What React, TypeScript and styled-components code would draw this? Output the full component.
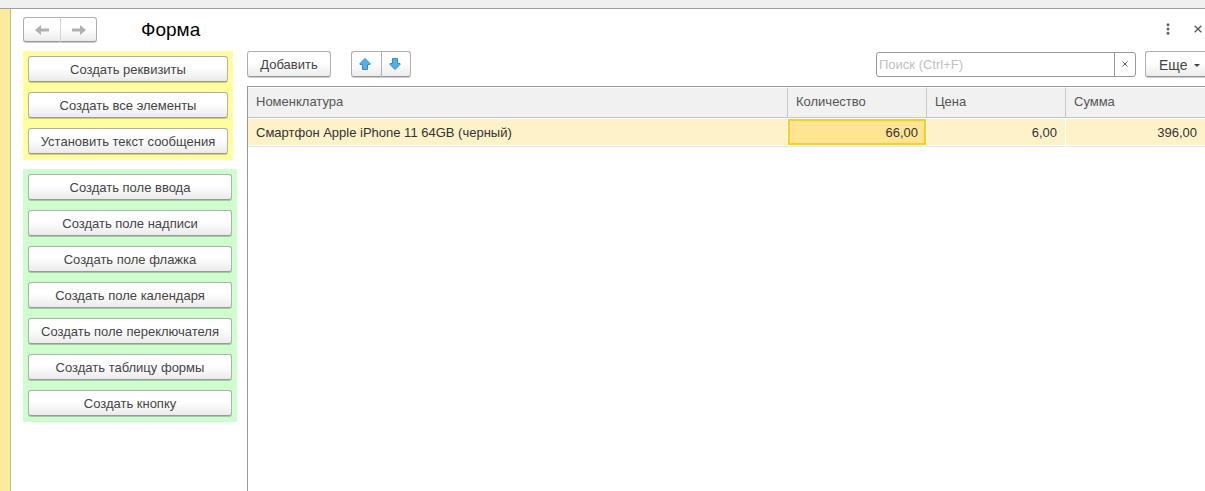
import React from "react";
import styled, { createGlobalStyle, css } from "styled-components";

const GlobalStyle = createGlobalStyle`
  *, *::before, *::after { box-sizing: border-box; }
  body {
    margin: 0;
    background: #fff;
    color: #333;
    font: 13px/16px "Liberation Sans", Arial, sans-serif;
  }
  button, input { font: inherit; color: inherit; }
`;

const Page = styled.div`
  display: flex;
  flex-direction: column;
  min-height: 100vh;
  overflow: hidden;
`;

const TopStrip = styled.div`
  height: 9px;
  background: #f0f0f0;
  border-bottom: 1px solid #a0a0a0;
`;

const Workspace = styled.div`
  flex: 1;
  display: flex;
`;

const SideStrip = styled.div`
  flex: none;
  width: 11px;
  background: #fbeb9e;
  border-right: 1px solid #c9bc7e;
`;

const Form = styled.main`
  flex: 1;
  min-width: 0;
  display: flex;
  flex-direction: column;
  padding: 8px 0 0 12px;
`;

const Header = styled.header`
  display: flex;
  align-items: flex-start;
  height: 26px;
  margin-bottom: 8px;
`;

const Title = styled.h1`
  flex: 1;
  margin: 0 0 0 44px;
  font-size: 19px;
  line-height: 26px;
  font-weight: 400;
  color: #000;
`;

const raised = css`
  height: 26px;
  padding: 0;
  border: 1px solid #b0b0b0;
  border-bottom-color: #999;
  border-radius: 3px;
  background: linear-gradient(#fff 45%, #ebebeb);
  box-shadow: 0 1px rgba(0, 0, 0, 0.2);
  color: #444;
`;

const Button = styled.button`
  ${raised}
  padding-top: 2px;
`;

const ButtonPair = styled.div<{ $divider: string }>`
  display: flex;
  button + button {
    border-left-color: ${(p) => p.$divider};
  }
`;

const PairButton = styled.button<{ $width: number }>`
  ${raised}
  display: flex;
  align-items: center;
  justify-content: center;
  width: ${(p) => p.$width}px;
  &:first-child {
    border-right: 0;
    border-radius: 3px 0 0 3px;
  }
  &:last-child {
    border-radius: 0 3px 3px 0;
  }
`;

const NavPair = styled(ButtonPair)`
  button {
    height: 25px;
    padding-top: 1px;
  }
`;

const MovePair = styled(ButtonPair)`
  button { padding-right: 3px; }
`;

const IconButton = styled.button`
  display: flex;
  align-items: center;
  justify-content: center;
  width: 30px;
  height: 23px;
  padding: 0;
  border: 0;
  background: none;
`;

const CloseButton = styled(IconButton)`
  width: 14px;
  margin-left: 8px;
`;

const Columns = styled.div`
  flex: 1;
  display: flex;
  gap: 10px;
`;

const Sidebar = styled.aside`
  flex: none;
  width: 214px;
  display: flex;
  flex-direction: column;
  align-items: flex-start;
  gap: 9px;
`;

const Group = styled.div<{ $color: string; $width: number }>`
  display: flex;
  flex-direction: column;
  gap: 10px;
  width: ${(p) => p.$width}px;
  padding: 5px 5px 6px;
  background: ${(p) => p.$color};
`;

const Content = styled.section`
  flex: 1;
  min-width: 0;
  display: flex;
  flex-direction: column;
`;

const Toolbar = styled.div`
  display: flex;
  align-items: flex-start;
  height: 27px;
  margin-bottom: 8px;
`;

const AddButton = styled(Button)`
  width: 84px;
  margin-right: 20px;
`;

const Search = styled.div`
  display: flex;
  align-self: flex-end;
  width: 260px;
  height: 25px;
  margin: 0 9px 1px auto;
  border: 1px solid #999;
  border-radius: 3px;
`;

const SearchInput = styled.input`
  flex: 1;
  min-width: 0;
  padding: 1px 2px 0;
  border: 0;
  outline: 0;
  background: none;
  &::placeholder {
    color: #c0c0c8;
    opacity: 1;
  }
`;

const ClearButton = styled.button`
  display: flex;
  align-items: center;
  justify-content: center;
  width: 21px;
  padding: 0 1px 2px 0;
  border: 0;
  border-left: 1px solid #999;
  background: none;
`;

const MoreButton = styled(Button)`
  display: flex;
  align-items: center;
  gap: 6px;
  width: 60px;
  padding-left: 13px;
  border-right: 0;
  border-radius: 3px 0 0 3px;
  font-size: 14px;
`;

const TableArea = styled.div`
  flex: 1;
  border: solid #999;
  border-width: 1px 0 0 1px;
`;

const Table = styled.table`
  width: 100%;
  table-layout: fixed;
  border-collapse: separate;
  border-spacing: 0;
`;

const HeadCell = styled.th`
  height: 31px;
  padding: 0 8px 2px;
  border-top: 1px solid #fff;
  border-bottom: 1px solid #c8c8c8;
  background: #f1f1f1;
  color: #555;
  font-weight: 400;
  text-align: left;
  & + & {
    border-left: 1px solid #c8c8c8;
  }
`;

const Cell = styled.td<{ $numeric?: boolean; $active?: boolean }>`
  height: 29px;
  padding: 0 8px;
  border-top: 1px solid #fff;
  border-bottom: 1px solid #e6e6ea;
  background: #fef2c8;
  box-shadow: inset 0 -1px #fff;
  text-align: ${(p) => (p.$numeric ? "right" : "left")};
  & + & { border-left: 1px solid #fff; }
  ${(p) =>
    p.$active &&
    css`
      background: #ffe592;
      box-shadow: inset 0 -1px #fff, inset 0 -3px #fc2, inset -2px 0 #fc2, inset 2px 2px #fc2;
    `}
`;

const setupActions = ["Создать реквизиты", "Создать все элементы", "Установить текст сообщения"];

const elementActions = [
  "Создать поле ввода",
  "Создать поле надписи",
  "Создать поле флажка",
  "Создать поле календаря",
  "Создать поле переключателя",
  "Создать таблицу формы",
  "Создать кнопку",
];

const rows = [
  { name: "Смартфон Apple iPhone 11 64GB (черный)", quantity: "66,00", price: "6,00", total: "396,00" },
];

const NavArrow = ({ forward }: { forward?: boolean }) => (
  <svg width="14" height="10" viewBox="0 0 14 10" aria-hidden="true">
    <path
      d={forward ? "M0 3.5H8V0L14 5L8 10V6.5H0Z" : "M14 3.5H6V0L0 5L6 10V6.5H14Z"}
      fill="#b0b0b0"
    />
  </svg>
);

const MoveArrow = ({ down }: { down?: boolean }) => (
  <svg width="12" height="12" viewBox="0 0 12 12" aria-hidden="true">
    <path
      d={down ? "M3.5 .5H8.5V5.5H11V6.5L6 11.5L1 6.5V5.5H3.5Z" : "M3.5 11.5H8.5V6.5H11V5.5L6 .5L1 5.5V6.5H3.5Z"}
      fill="#4ab4f0"
      stroke="#3d88b4"
      strokeLinejoin="round"
    />
  </svg>
);

const Cross = ({ size }: { size: number }) => (
  <svg width={size} height={size} viewBox="0 0 8 8" aria-hidden="true">
    <path d="M.7 .7L7.3 7.3M7.3 .7L.7 7.3" stroke="#555" strokeWidth="1.3" />
  </svg>
);

export default function App() {
  return (
    <Page>
      <GlobalStyle />
      <TopStrip />
      <Workspace>
        <SideStrip />
        <Form>
          <Header>
            <NavPair $divider="#d4d4d4">
              <PairButton $width={37} aria-label="Назад"><NavArrow /></PairButton>
              <PairButton $width={37} aria-label="Вперед"><NavArrow forward /></PairButton>
            </NavPair>
            <Title>Форма</Title>
            <IconButton aria-label="Меню">
              <svg width="4" height="12" viewBox="0 0 4 12" fill="#666" aria-hidden="true">
                <circle cx="2" cy="1.7" r="1.5" />
                <circle cx="2" cy="6" r="1.5" />
                <circle cx="2" cy="10.3" r="1.5" />
              </svg>
            </IconButton>
            <CloseButton aria-label="Закрыть"><Cross size={8} /></CloseButton>
          </Header>
          <Columns>
            <Sidebar>
              <Group $color="#ffff99" $width={210}>
                {setupActions.map((label) => <Button key={label}>{label}</Button>)}
              </Group>
              <Group $color="#ccffcc" $width={214}>
                {elementActions.map((label) => <Button key={label}>{label}</Button>)}
              </Group>
            </Sidebar>
            <Content>
              <Toolbar>
                <AddButton>Добавить</AddButton>
                <MovePair $divider="#b0b0b0">
                  <PairButton $width={30} aria-label="Переместить вверх"><MoveArrow /></PairButton>
                  <PairButton $width={30} aria-label="Переместить вниз"><MoveArrow down /></PairButton>
                </MovePair>
                <Search>
                  <SearchInput type="text" aria-label="Поиск" placeholder="Поиск (Ctrl+F)" />
                  <ClearButton aria-label="Очистить"><Cross size={6} /></ClearButton>
                </Search>
                <MoreButton>
                  Еще
                  <svg width="6" height="3" viewBox="0 0 6 3" aria-hidden="true">
                    <path d="M0 0H6L3 3Z" fill="#444" />
                  </svg>
                </MoreButton>
              </Toolbar>
              <TableArea>
                <Table>
                  <colgroup>
                    <col />
                    <col style={{ width: 139 }} />
                    <col style={{ width: 139 }} />
                    <col style={{ width: 140 }} />
                  </colgroup>
                  <thead>
                    <tr>
                      <HeadCell>Номенклатура</HeadCell>
                      <HeadCell>Количество</HeadCell>
                      <HeadCell>Цена</HeadCell>
                      <HeadCell>Сумма</HeadCell>
                    </tr>
                  </thead>
                  <tbody>
                    {rows.map((row) => (
                      <tr key={row.name}>
                        <Cell>{row.name}</Cell>
                        <Cell $numeric $active>{row.quantity}</Cell>
                        <Cell $numeric>{row.price}</Cell>
                        <Cell $numeric>{row.total}</Cell>
                      </tr>
                    ))}
                  </tbody>
                </Table>
              </TableArea>
            </Content>
          </Columns>
        </Form>
      </Workspace>
    </Page>
  );
}
